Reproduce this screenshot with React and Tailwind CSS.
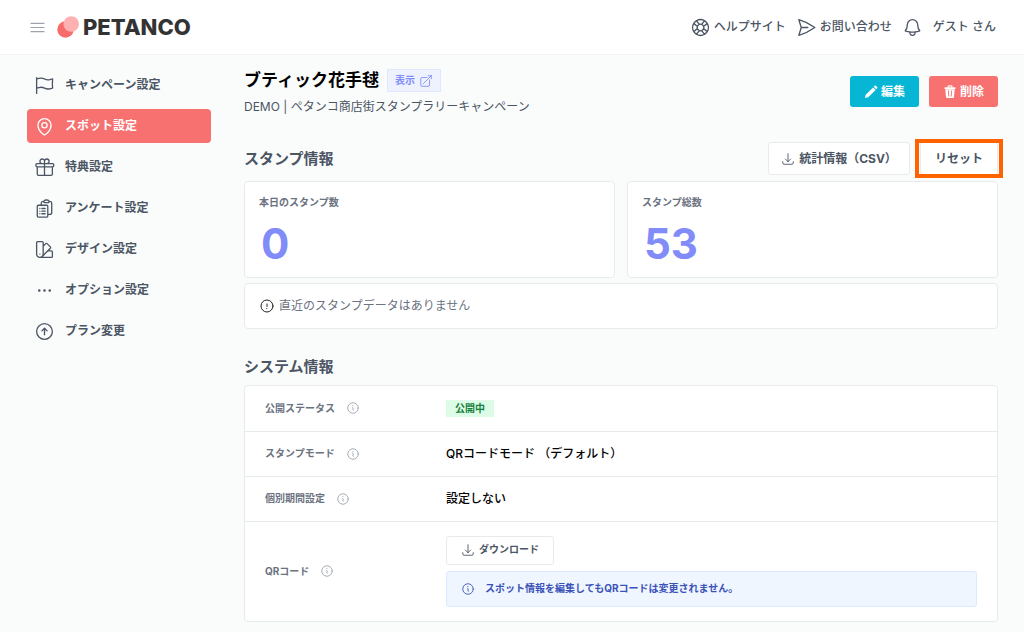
import React from "react";
import {
  HiOutlineArrowDownTray,
  HiOutlineArrowTopRightOnSquare,
  HiOutlineArrowUpCircle,
  HiOutlineBars3,
  HiOutlineBell,
  HiOutlineClipboardDocumentList,
  HiOutlineEllipsisHorizontal,
  HiOutlineExclamationCircle,
  HiOutlineFlag,
  HiOutlineGift,
  HiOutlineInformationCircle,
  HiOutlineLifebuoy,
  HiOutlineMapPin,
  HiOutlinePaperAirplane,
  HiOutlineSwatch,
} from "react-icons/hi2";

const NAV = [
  { label: "キャンペーン設定", Icon: HiOutlineFlag },
  { label: "スポット設定", Icon: HiOutlineMapPin, active: true },
  { label: "特典設定", Icon: HiOutlineGift },
  { label: "アンケート設定", Icon: HiOutlineClipboardDocumentList },
  { label: "デザイン設定", Icon: HiOutlineSwatch },
  { label: "オプション設定", Icon: HiOutlineEllipsisHorizontal },
  { label: "プラン変更", Icon: HiOutlineArrowUpCircle },
];

function PencilIcon() {
  return (
    <svg viewBox="0 0 14 14" className="size-3.5" fill="currentColor" aria-hidden="true">
      <path d="M1 13l.7-3.2 7.4-7.4 2.5 2.5-7.4 7.4L1 13z" />
      <path d="M9.8 1.7l.8-.8c.4-.4 1-.4 1.4 0l1.1 1.1c.4.4.4 1 0 1.4l-.8.8-2.5-2.5z" />
    </svg>
  );
}

function TrashIcon() {
  return (
    <svg viewBox="0 0 14 14" className="size-3.5" aria-hidden="true">
      <path d="M5 2.5V1.6c0-.4.3-.7.7-.7h2.6c.4 0 .7.3.7.7v.9" fill="none" stroke="currentColor" strokeWidth="1.1" />
      <path
        fill="currentColor"
        fillRule="evenodd"
        d="M2 2.3h10c.3 0 .5.2.5.5v1.1h-11V2.8c0-.3.2-.5.5-.5zM2.3 4.3h9.4L11 12.1c-.1.6-.5 1-1.1 1H4.1c-.6 0-1-.4-1.1-1L2.3 4.3zM5 5.4l.3 6.2h.9L5.9 5.4H5zm3.1 0-.3 6.2h.9L9 5.4h-.9z"
      />
    </svg>
  );
}

function Header() {
  return (
    <header className="flex h-[55px] items-center justify-between border-b border-[#f0f2f3] bg-white pl-7 pr-7">
      <div className="flex items-center gap-2.5">
        <button type="button" aria-label="メニュー" className="text-[#9ca3af]">
          <HiOutlineBars3 className="size-[19px]" />
        </button>
        <a href="#" className="flex items-center gap-1 text-[#333]">
          <svg viewBox="0 0 22 22" className="size-[22px]" aria-hidden="true">
            <circle cx="8.5" cy="13.5" r="8.2" fill="#f86b6b" />
            <circle cx="14.2" cy="8" r="7.8" fill="#ffb0b0" />
          </svg>
          <span className="text-[22px] leading-6 font-extrabold">PETANCO</span>
        </a>
      </div>
      <nav className="flex items-center gap-2.5 text-xs font-medium text-[#4b5563]">
        <a href="#" className="flex items-center gap-[3px]">
          <HiOutlineLifebuoy className="size-[21px]" />
          ヘルプサイト
        </a>
        <a href="#" className="flex items-center gap-[3px]">
          <HiOutlinePaperAirplane className="size-[21px]" />
          お問い合わせ
        </a>
        <button type="button" aria-label="お知らせ">
          <HiOutlineBell className="size-[21px]" />
        </button>
        <span>ゲスト さん</span>
      </nav>
    </header>
  );
}

function Sidebar() {
  return (
    <nav className="flex w-[184px] shrink-0 flex-col gap-[7px] pt-[13px]">
      {NAV.map(({ label, Icon, active }) => (
        <a
          key={label}
          href="#"
          aria-current={active ? "page" : undefined}
          className={
            active
              ? "flex h-[34px] items-center gap-2.5 rounded bg-[#f87171] px-[7px] text-xs font-bold text-white"
              : "flex h-[34px] items-center gap-2.5 rounded px-[7px] text-xs font-bold text-[#4b5563]"
          }
        >
          <Icon className="size-[21px]" />
          {label}
        </a>
      ))}
    </nav>
  );
}

function StatCard({ label, value }) {
  return (
    <div className="h-[97px] rounded border border-[#e8ebed] bg-white px-3.5 pt-3">
      <h3 className="text-[10px] leading-4 font-bold text-[#6b7280]">{label}</h3>
      <p className="mt-3 px-0.5 text-[42px] leading-[44px] font-bold text-[#818cf8]">{value}</p>
    </div>
  );
}

function InfoRow({ label, children }) {
  return (
    <tr className="border-b border-[#e8ebed] last:border-b-0">
      <th scope="row" className="w-[201px] pl-5 text-left align-middle text-[10px] font-bold text-[#6b7280]">
        <span className="flex items-center gap-[11px]">
          {label}
          <button type="button" aria-label={label + "の説明"} className="text-[#9ca3af]">
            <HiOutlineInformationCircle className="size-3.5" />
          </button>
        </span>
      </th>
      <td className="h-[45px] pr-5 text-xs font-medium text-black">{children}</td>
    </tr>
  );
}

export default function App() {
  return (
    <div className="min-h-screen bg-[#fafcfc] font-['Inter','Noto_Sans_CJK_JP',sans-serif]">
      <Header />
      <div className="flex gap-[33px] pl-[27px] pr-[26px]">
        <Sidebar />
        <main className="min-w-0 flex-1 pt-3.5 pb-2.5">
          <div className="flex items-start justify-between">
            <div>
              <div className="flex items-center gap-2">
                <h1 className="text-[17px] leading-[23px] font-bold text-black">ブティック花手毬</h1>
                <a
                  href="#"
                  className="flex h-[23px] items-center gap-1 border border-[#e0e7ff] bg-[#eef2ff] px-[7px] text-[10px] font-bold text-[#818cf8]"
                >
                  表示
                  <HiOutlineArrowTopRightOnSquare className="size-3.5" />
                </a>
              </div>
              <p className="mt-[5px] text-xs leading-5 text-[#4b5563]">
                DEMO | ペタンコ商店街スタンプラリーキャンペーン
              </p>
            </div>
            <div className="flex gap-2.5 pt-[7px] text-xs font-bold text-white">
              <button type="button" className="flex h-[31px] w-[69px] items-center justify-center gap-[3px] rounded-[3px] bg-[#06b6d4]">
                <PencilIcon />
                編集
              </button>
              <button type="button" className="flex h-[31px] w-[69px] items-center justify-center gap-[3px] rounded-[3px] bg-[#f87171]">
                <TrashIcon />
                削除
              </button>
            </div>
          </div>

          <section className="mt-[25px]">
            <div className="mb-1.5 flex h-[33px] items-center justify-between">
              <h2 className="text-[15px] leading-6 font-bold text-[#4b5563]">スタンプ情報</h2>
              <div className="flex gap-2.5 text-xs font-bold text-[#4b5563]">
                <button type="button" className="flex h-[33px] w-[142px] items-center justify-center gap-1 rounded-[3px] border border-[#e8ebed] bg-white">
                  <HiOutlineArrowDownTray className="size-3.5" />
                  統計情報（CSV）
                </button>
                <div className="relative">
                  <button type="button" className="h-[33px] w-[78px] rounded-[3px] border border-[#e8ebed] bg-white">
                    リセット
                  </button>
                  <span className="pointer-events-none absolute -inset-x-[5px] -inset-y-[3px] border-4 border-[#ff6200]" />
                </div>
              </div>
            </div>
            <div className="grid grid-cols-2 gap-3">
              <StatCard label="本日のスタンプ数" value="0" />
              <StatCard label="スタンプ総数" value="53" />
            </div>
            <p className="mt-[5px] flex h-[46px] items-center gap-1 rounded border border-[#e8ebed] bg-white px-3.5 text-xs text-[#6b7280]">
              <HiOutlineExclamationCircle className="size-4 text-[#222]" />
              直近のスタンプデータはありません
            </p>
          </section>

          <section className="mt-[26px]">
            <h2 className="mb-1.5 text-[15px] leading-6 font-bold text-[#4b5563]">システム情報</h2>
            <div className="rounded border border-[#e8ebed] bg-white">
              <table className="w-full">
                <tbody>
                  <InfoRow label="公開ステータス">
                    <span className="inline-block bg-[#dcfce7] px-[9px] text-[10px] leading-[17px] font-bold text-[#15803d]">
                      公開中
                    </span>
                  </InfoRow>
                  <InfoRow label="スタンプモード">QRコードモード （デフォルト）</InfoRow>
                  <InfoRow label="個別期間設定">設定しない</InfoRow>
                  <InfoRow label="QRコード">
                    <div className="flex flex-col items-start gap-1.5 py-3.5">
                      <button type="button" className="flex h-[29px] items-center gap-1 rounded-[3px] border border-[#e8ebed] px-3.5 text-[10px] font-bold text-[#4b5563]">
                        <HiOutlineArrowDownTray className="size-3.5" />
                        ダウンロード
                      </button>
                      <p className="flex h-9 w-full items-center gap-2.5 rounded-[3px] border border-[#dbeafe] bg-[#eff6ff] px-3.5 text-[10px] font-bold text-[#3b52b8]">
                        <HiOutlineInformationCircle className="size-3.5" />
                        スポット情報を編集してもQRコードは変更されません。
                      </p>
                    </div>
                  </InfoRow>
                </tbody>
              </table>
            </div>
          </section>
        </main>
      </div>
    </div>
  );
}
